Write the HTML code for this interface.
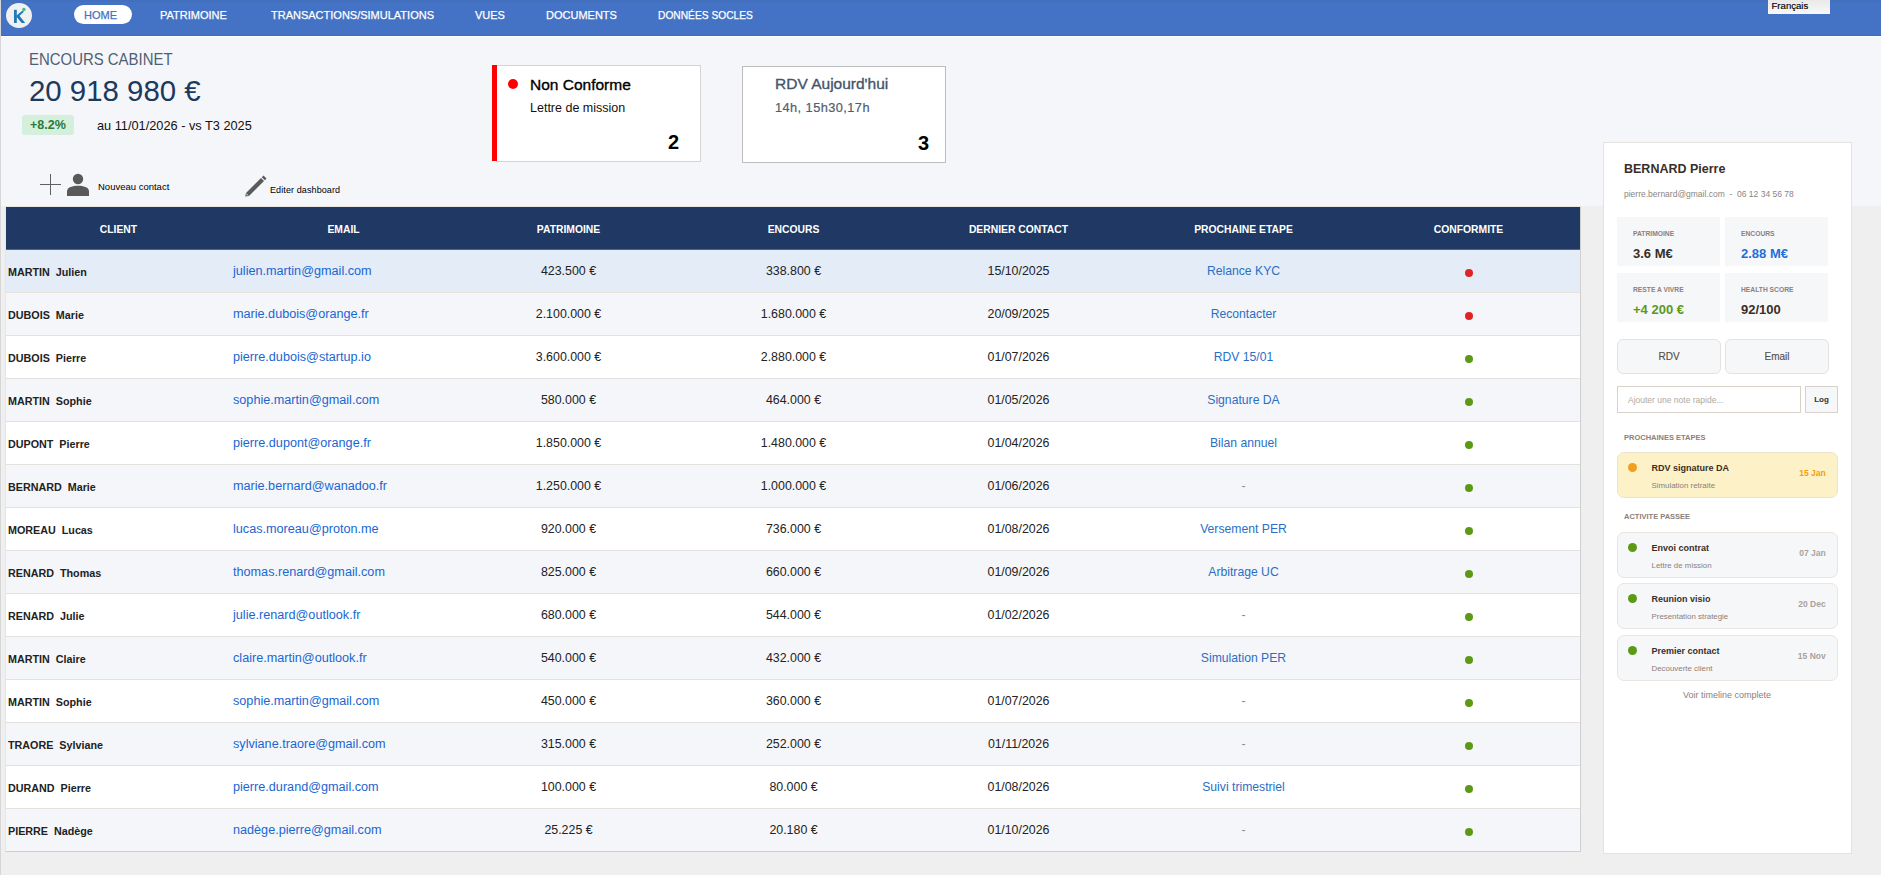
<!DOCTYPE html>
<html><head><meta charset="utf-8">
<style>
*{margin:0;padding:0;box-sizing:border-box}
html,body{width:1881px;height:875px;overflow:hidden}
body{position:relative;background:#efefef;font-family:"Liberation Sans",sans-serif;color:#222}
.a{position:absolute;white-space:nowrap}
#edge{left:0;top:0;width:1px;height:875px;background:#d6d6d6}
#top{left:1px;top:36px;width:1880px;height:170px;background:#f5f6fa}
#nav{left:1px;top:0;width:1880px;height:36px;background:#4472c4;border-top:2px solid #4270bc;border-bottom:1px solid #3d6bc0}
#navline{left:1px;top:36px;width:1880px;height:1px;background:#ffffff}
#logo{left:6px;top:2.5px;width:26px;height:25.5px;border-radius:50%;background:#f0f0f0}
.nv{top:9px;font-size:11px;color:#fff;letter-spacing:0;-webkit-text-stroke:0.25px #fff}
#home{left:74px;top:5px;width:58px;height:19px;border-radius:10px;background:#fff}

.row{left:6px;width:1574px;height:43px;border-bottom:1px solid #e4e1de}
.cn{left:2px;top:16px;font-size:10.75px;font-weight:bold;color:#222}
.em{left:227px;top:14px;font-size:12.65px;color:#1966d2}
.nm{top:14px;width:225px;text-align:center;font-size:12.4px;color:#222}
.ps{top:14px;width:225px;text-align:center;font-size:12.2px;color:#2a6fc4}
.dash{color:#8a878c}
.dot{left:1459px;top:18.7px;width:8px;height:8px;border-radius:50%}
.dot.r{background:#e02424}
.dot.g{background:#5c9a16}
#thead{left:6px;top:207px;width:1574px;height:43px;background:#1f3864;border-bottom:1px solid #5d6470}
.th{top:16px;width:225px;text-align:center;font-size:11px;font-weight:bold;color:#fff;transform:scaleX(0.94)}
#tframe{left:5px;top:206px;width:1576px;height:646px;border:1px solid #e8e4e0;border-right-color:#cfcfcf;border-bottom-color:#cfcfcf}

#enc-t{left:29px;top:50px;font-size:16.5px;color:#4e5f74;transform-origin:0 0;transform:scaleX(0.905)}
#enc-v{left:29px;top:74px;font-size:30px;color:#1b3a5e;transform-origin:0 0;transform:scaleX(0.98)}
#badge{left:22px;top:115px;width:52px;height:20px;border-radius:3px;background:#d4efdb}
#badge-t{left:30px;top:118px;font-size:12.5px;font-weight:bold;color:#2c7a3c}
#date-t{left:97px;top:118px;font-size:12.75px;color:#111}
.card{background:#fff;border:1px solid #d4d4d4}
#c1{left:496px;top:65px;width:205px;height:97px}
#rbar{left:492px;top:65px;width:5px;height:96px;background:#ff0000}
#c2{left:742px;top:66px;width:204px;height:97px;border-color:#bdbdbd}
#rdot{left:508px;top:79px;width:10px;height:10px;border-radius:50%;background:#ff0000}
#c1t{left:530px;top:76px;font-size:15.5px;color:#000;-webkit-text-stroke:0.35px #000}
#c1s{left:530px;top:101px;font-size:12.5px;color:#111}
#c1n{left:668px;top:131px;font-size:20px;font-weight:bold;color:#000}
#c2t{left:775px;top:75px;font-size:15.5px;color:#44546a;-webkit-text-stroke:0.35px #44546a}
#c2s{left:775px;top:100px;font-size:12.75px;letter-spacing:0.45px;color:#4f5d70;-webkit-text-stroke:0.2px #4f5d70}
#c2n{left:918px;top:132px;font-size:20px;font-weight:bold;color:#000}
#nc-t{left:98px;top:181px;font-size:9.5px;color:#000}
#ed-t{left:270px;top:185px;font-size:9px;letter-spacing:0.1px;color:#000}
#panel{left:1603px;top:142px;width:249px;height:712px;background:#fff;border:1px solid #e6e2df}
.pn{color:#3a2e28}
.sbox{width:103px;height:49px;background:#f6f7f9}
.slab{font-size:7px;font-weight:bold;color:#8c807a;margin-top:0.7px;transform-origin:0 0;transform:scaleX(0.96)}
.sval{font-size:13px;font-weight:bold;color:#3a2e28;margin-top:-0.5px}
.btn{width:104px;height:35px;background:#f6f7f9;border:1px solid #e6e2df;border-radius:6px;font-size:10px;color:#5a4f4a;-webkit-text-stroke:0.15px #5a4f4a;text-align:center;line-height:33px}
.sec{font-size:7.5px;font-weight:bold;color:#8c807a}
.tl{left:1617px;width:221px;height:46px;background:#f6f7f9;border:1px solid #e8e5e2;border-radius:7px}
.tdot{left:9.5px;top:10px;width:9px;height:9px;border-radius:50%;background:#5c9a16}
.tt{left:33.5px;top:10px;font-size:9px;font-weight:bold;color:#3a2e28}
.ts{left:33.5px;top:28px;font-size:7.9px;color:#8c807a}
.td{right:11.3px;top:15px;font-size:8.5px;font-weight:bold;color:#aaa29c}
</style></head><body>
<div class="a" id="edge"></div>
<div class="a" id="top"></div>
<div class="a" id="nav"></div>
<div class="a" id="navline"></div>
<div class="a" id="logo"><svg width="26" height="26" viewBox="0 1 26 26"><path d="M8 7.8H10.8V21H8Z" fill="#1f78b8"/><path d="M10.6 13.6L16.6 8.4L17.9 9.8L10.6 16.4Z" fill="#1f78b8"/><path d="M12.2 12.3L19.2 21H15.6L10.6 14.8Z" fill="#1f78b8"/><circle cx="17.9" cy="7.4" r="1.7" fill="#3dbb8a"/></svg></div>
<div class="a" id="home"></div>
<div class="a nv" style="left:84px;color:#4472c4;-webkit-text-stroke:0.25px #4472c4">HOME</div>
<div class="a nv" style="left:160px">PATRIMOINE</div>
<div class="a nv" style="left:271px">TRANSACTIONS/SIMULATIONS</div>
<div class="a nv" style="left:475px">VUES</div>
<div class="a nv" style="left:546px">DOCUMENTS</div>
<div class="a nv" style="left:658px;transform-origin:0 0;transform:scaleX(0.93)">DONNÉES SOCLES</div>
<div class="a" style="left:1768px;top:0;width:62px;height:14px;background:linear-gradient(#e9e9e9,#f8f8f8)"></div>
<div class="a" style="left:1771.5px;top:-0.5px;font-size:9.6px;color:#000;-webkit-text-stroke:0.15px #000">Français</div>


<div class="a" id="thead">
<div class="a th" style="left:0">CLIENT</div>
<div class="a th" style="left:225px">EMAIL</div>
<div class="a th" style="left:450px">PATRIMOINE</div>
<div class="a th" style="left:675px">ENCOURS</div>
<div class="a th" style="left:900px">DERNIER CONTACT</div>
<div class="a th" style="left:1125px">PROCHAINE ETAPE</div>
<div class="a th" style="left:1350px">CONFORMITE</div>
</div>
<div class="a row" style="top:250px;background:#e3ecf7">
<div class="a cn">MARTIN&nbsp; Julien</div>
<div class="a em">julien.martin@gmail.com</div>
<div class="a nm" style="left:450px">423.500 €</div>
<div class="a nm" style="left:675px">338.800 €</div>
<div class="a nm" style="left:900px">15/10/2025</div>
<div class="a ps" style="left:1125px">Relance KYC</div>
<div class="a dot r"></div>
</div>
<div class="a row" style="top:293px;background:#f5f6fa">
<div class="a cn">DUBOIS&nbsp; Marie</div>
<div class="a em">marie.dubois@orange.fr</div>
<div class="a nm" style="left:450px">2.100.000 €</div>
<div class="a nm" style="left:675px">1.680.000 €</div>
<div class="a nm" style="left:900px">20/09/2025</div>
<div class="a ps" style="left:1125px">Recontacter</div>
<div class="a dot r"></div>
</div>
<div class="a row" style="top:336px;background:#ffffff">
<div class="a cn">DUBOIS&nbsp; Pierre</div>
<div class="a em">pierre.dubois@startup.io</div>
<div class="a nm" style="left:450px">3.600.000 €</div>
<div class="a nm" style="left:675px">2.880.000 €</div>
<div class="a nm" style="left:900px">01/07/2026</div>
<div class="a ps" style="left:1125px">RDV 15/01</div>
<div class="a dot g"></div>
</div>
<div class="a row" style="top:379px;background:#f5f6fa">
<div class="a cn">MARTIN&nbsp; Sophie</div>
<div class="a em">sophie.martin@gmail.com</div>
<div class="a nm" style="left:450px">580.000 €</div>
<div class="a nm" style="left:675px">464.000 €</div>
<div class="a nm" style="left:900px">01/05/2026</div>
<div class="a ps" style="left:1125px">Signature DA</div>
<div class="a dot g"></div>
</div>
<div class="a row" style="top:422px;background:#ffffff">
<div class="a cn">DUPONT&nbsp; Pierre</div>
<div class="a em">pierre.dupont@orange.fr</div>
<div class="a nm" style="left:450px">1.850.000 €</div>
<div class="a nm" style="left:675px">1.480.000 €</div>
<div class="a nm" style="left:900px">01/04/2026</div>
<div class="a ps" style="left:1125px">Bilan annuel</div>
<div class="a dot g"></div>
</div>
<div class="a row" style="top:465px;background:#f5f6fa">
<div class="a cn">BERNARD&nbsp; Marie</div>
<div class="a em">marie.bernard@wanadoo.fr</div>
<div class="a nm" style="left:450px">1.250.000 €</div>
<div class="a nm" style="left:675px">1.000.000 €</div>
<div class="a nm" style="left:900px">01/06/2026</div>
<div class="a ps dash" style="left:1125px">-</div>
<div class="a dot g"></div>
</div>
<div class="a row" style="top:508px;background:#ffffff">
<div class="a cn">MOREAU&nbsp; Lucas</div>
<div class="a em">lucas.moreau@proton.me</div>
<div class="a nm" style="left:450px">920.000 €</div>
<div class="a nm" style="left:675px">736.000 €</div>
<div class="a nm" style="left:900px">01/08/2026</div>
<div class="a ps" style="left:1125px">Versement PER</div>
<div class="a dot g"></div>
</div>
<div class="a row" style="top:551px;background:#f5f6fa">
<div class="a cn">RENARD&nbsp; Thomas</div>
<div class="a em">thomas.renard@gmail.com</div>
<div class="a nm" style="left:450px">825.000 €</div>
<div class="a nm" style="left:675px">660.000 €</div>
<div class="a nm" style="left:900px">01/09/2026</div>
<div class="a ps" style="left:1125px">Arbitrage UC</div>
<div class="a dot g"></div>
</div>
<div class="a row" style="top:594px;background:#ffffff">
<div class="a cn">RENARD&nbsp; Julie</div>
<div class="a em">julie.renard@outlook.fr</div>
<div class="a nm" style="left:450px">680.000 €</div>
<div class="a nm" style="left:675px">544.000 €</div>
<div class="a nm" style="left:900px">01/02/2026</div>
<div class="a ps dash" style="left:1125px">-</div>
<div class="a dot g"></div>
</div>
<div class="a row" style="top:637px;background:#f5f6fa">
<div class="a cn">MARTIN&nbsp; Claire</div>
<div class="a em">claire.martin@outlook.fr</div>
<div class="a nm" style="left:450px">540.000 €</div>
<div class="a nm" style="left:675px">432.000 €</div>
<div class="a nm" style="left:900px"></div>
<div class="a ps" style="left:1125px">Simulation PER</div>
<div class="a dot g"></div>
</div>
<div class="a row" style="top:680px;background:#ffffff">
<div class="a cn">MARTIN&nbsp; Sophie</div>
<div class="a em">sophie.martin@gmail.com</div>
<div class="a nm" style="left:450px">450.000 €</div>
<div class="a nm" style="left:675px">360.000 €</div>
<div class="a nm" style="left:900px">01/07/2026</div>
<div class="a ps dash" style="left:1125px">-</div>
<div class="a dot g"></div>
</div>
<div class="a row" style="top:723px;background:#f5f6fa">
<div class="a cn">TRAORE&nbsp; Sylviane</div>
<div class="a em">sylviane.traore@gmail.com</div>
<div class="a nm" style="left:450px">315.000 €</div>
<div class="a nm" style="left:675px">252.000 €</div>
<div class="a nm" style="left:900px">01/11/2026</div>
<div class="a ps dash" style="left:1125px">-</div>
<div class="a dot g"></div>
</div>
<div class="a row" style="top:766px;background:#ffffff">
<div class="a cn">DURAND&nbsp; Pierre</div>
<div class="a em">pierre.durand@gmail.com</div>
<div class="a nm" style="left:450px">100.000 €</div>
<div class="a nm" style="left:675px">80.000 €</div>
<div class="a nm" style="left:900px">01/08/2026</div>
<div class="a ps" style="left:1125px">Suivi trimestriel</div>
<div class="a dot g"></div>
</div>
<div class="a row" style="top:809px;background:#f5f6fa">
<div class="a cn">PIERRE&nbsp; Nadège</div>
<div class="a em">nadège.pierre@gmail.com</div>
<div class="a nm" style="left:450px">25.225 €</div>
<div class="a nm" style="left:675px">20.180 €</div>
<div class="a nm" style="left:900px">01/10/2026</div>
<div class="a ps dash" style="left:1125px">-</div>
<div class="a dot g"></div>
</div>

<div class="a" id="tframe"></div>
<div class="a" id="enc-t">ENCOURS CABINET</div>
<div class="a" id="enc-v">20 918 980 €</div>
<div class="a" id="badge"></div>
<div class="a" id="badge-t">+8.2%</div>
<div class="a" id="date-t">au 11/01/2026 - vs T3 2025</div>
<div class="a card" id="c1"></div>
<div class="a" id="rbar"></div>
<div class="a" id="rdot"></div>
<div class="a" id="c1t">Non Conforme</div>
<div class="a" id="c1s">Lettre de mission</div>
<div class="a" id="c1n">2</div>
<div class="a card" id="c2"></div>
<div class="a" id="c2t">RDV Aujourd'hui</div>
<div class="a" id="c2s">14h, 15h30,17h</div>
<div class="a" id="c2n">3</div>
<svg class="a" style="left:36px;top:170px" width="60" height="30" viewBox="36 170 60 30">
<path d="M40 184.5H61M50.5 174V195" stroke="#606060" stroke-width="1"/>
<circle cx="78" cy="179" r="5.2" fill="#595959"/>
<path d="M67 196V191.5C67 188 71 185.8 78 185.8C85 185.8 89 188 89 191.5V196Z" fill="#595959"/>
</svg>
<div class="a" id="nc-t">Nouveau contact</div>
<svg class="a" style="left:240px;top:170px" width="30" height="30" viewBox="240 170 30 30">
<path d="M263.5 175.5L266.5 178.5L264.8 180.2L261.8 177.2Z" fill="#5a5a5a"/>
<path d="M261 178L264 181L249 196L246 193Z" fill="#5a5a5a"/>
<path d="M246 193L249 196L245.2 196.6Z" fill="#5a5a5a"/><path d="M246.9 193.9L248.1 195.1L246.3 195.5Z" fill="#f5f6fa"/>
</svg>
<div class="a" id="ed-t">Editer dashboard</div>

<div class="a" id="panel"></div>
<div class="a pn" style="left:1624px;top:161.5px;font-size:12.5px;font-weight:bold">BERNARD Pierre</div>
<div class="a" style="left:1624px;top:189px;font-size:8.5px;color:#8c847f">pierre.bernard@gmail.com &nbsp;-&nbsp; 06 12 34 56 78</div>
<div class="a sbox" style="left:1617px;top:217px"></div>
<div class="a sbox" style="left:1725px;top:217px"></div>
<div class="a sbox" style="left:1617px;top:273px"></div>
<div class="a sbox" style="left:1725px;top:273px"></div>
<div class="a slab" style="left:1633px;top:229px">PATRIMOINE</div>
<div class="a slab" style="left:1741px;top:229px">ENCOURS</div>
<div class="a slab" style="left:1633px;top:285px">RESTE A VIVRE</div>
<div class="a slab" style="left:1741px;top:285px">HEALTH SCORE</div>
<div class="a sval" style="left:1633px;top:246px">3.6 M€</div>
<div class="a sval" style="left:1741px;top:246px;color:#1e6fd9">2.88 M€</div>
<div class="a sval" style="left:1633px;top:302px;color:#5a9a1a">+4 200 €</div>
<div class="a sval" style="left:1741px;top:302px">92/100</div>
<div class="a btn" style="left:1617px;top:339px">RDV</div>
<div class="a btn" style="left:1725px;top:339px">Email</div>
<div class="a" style="left:1617px;top:386px;width:184px;height:27px;background:#fff;border:1px solid #d9d2cb"></div>
<div class="a" style="left:1628px;top:395px;font-size:8.5px;color:#b0a9a3">Ajouter une note rapide...</div>
<div class="a" style="left:1805px;top:386px;width:33px;height:27px;background:#f6f7f9;border:1px solid #d9d2cb;font-size:8px;font-weight:bold;color:#3a2e28;text-align:center;line-height:25px">Log</div>
<div class="a sec" style="left:1624px;top:433px">PROCHAINES ETAPES</div>
<div class="a tl" style="top:452px;background:#fdf2c7;border-color:#ece4d0">
 <div class="a tdot" style="background:#f0a01e"></div>
 <div class="a tt">RDV signature DA</div>
 <div class="a ts">Simulation retraite</div>
 <div class="a td" style="color:#f29e0c">15 Jan</div>
</div>
<div class="a sec" style="left:1624px;top:512px">ACTIVITE PASSEE</div>
<div class="a tl" style="top:532px">
 <div class="a tdot"></div>
 <div class="a tt">Envoi contrat</div>
 <div class="a ts">Lettre de mission</div>
 <div class="a td">07 Jan</div>
</div>
<div class="a tl" style="top:583px">
 <div class="a tdot"></div>
 <div class="a tt">Reunion visio</div>
 <div class="a ts">Presentation strategie</div>
 <div class="a td">20 Dec</div>
</div>
<div class="a tl" style="top:635px">
 <div class="a tdot"></div>
 <div class="a tt">Premier contact</div>
 <div class="a ts">Decouverte client</div>
 <div class="a td">15 Nov</div>
</div>
<div class="a" style="left:1683px;top:690px;font-size:9px;color:#8c807a">Voir timeline complete</div>
</body></html>
